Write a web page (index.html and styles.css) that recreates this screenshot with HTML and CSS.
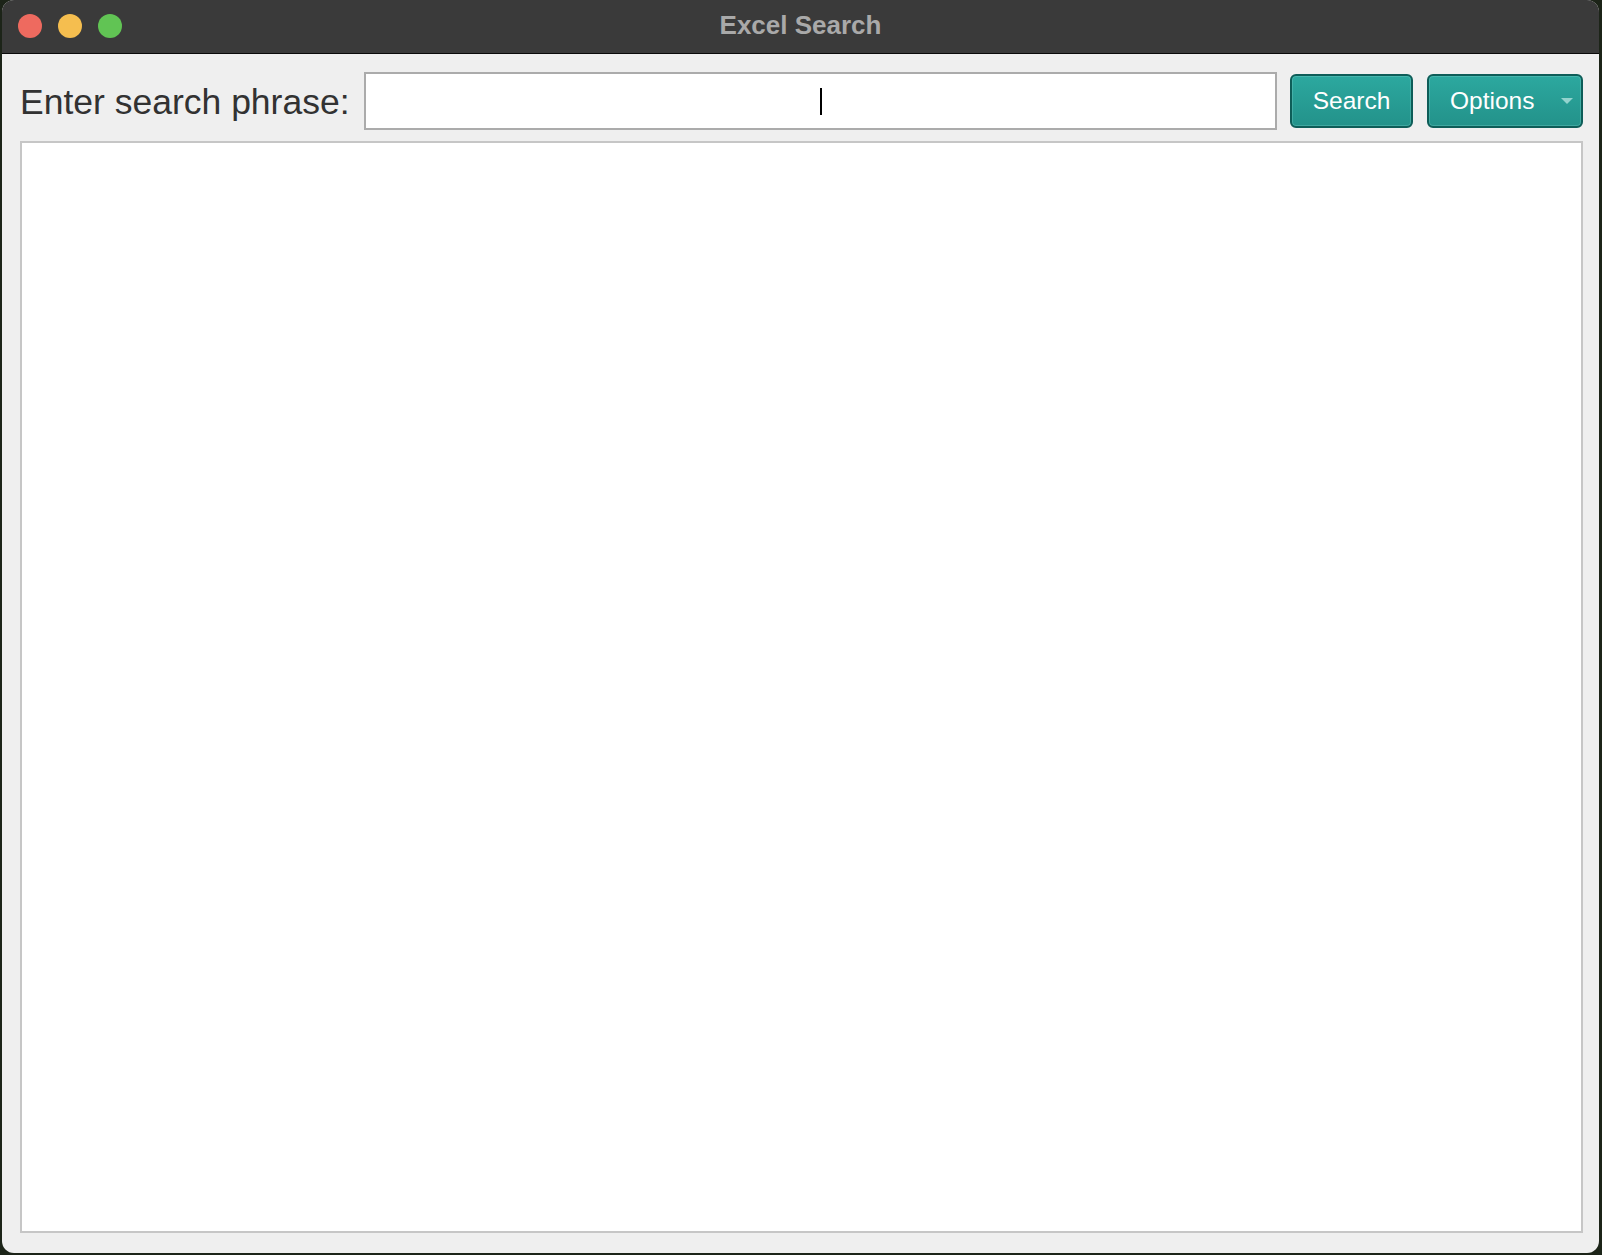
FILE: index.html
```html
<!DOCTYPE html>
<html>
<head>
<meta charset="utf-8">
<title>Excel Search</title>
<link rel="stylesheet" href="styles.css">
</head>
<body>
<div class="window">
  <div class="titlebar">
    <div class="lights">
      <span class="light red"></span>
      <span class="light yellow"></span>
      <span class="light green"></span>
    </div>
    <div class="title">Excel Search</div>
    <div></div>
  </div>
  <div class="content">
    <div class="row">
      <label class="label">Enter search phrase:</label>
      <div class="input"><span class="caret"></span></div>
      <button class="btn search">Search</button>
      <button class="btn options">Options<span class="arrow"></span></button>
    </div>
    <div class="results"></div>
  </div>
</div>
</body>
</html>
```
FILE: styles.css
```css
html, body {
  margin: 0;
  padding: 0;
}
body {
  width: 1602px;
  height: 1255px;
  overflow: hidden;
  background: #1c2418;
  font-family: "Liberation Sans", Arial, sans-serif;
}
.window {
  margin-left: 2px;
  width: 1597px;
  height: 1253px;
  border-radius: 12px;
  overflow: hidden;
  background: #efefef;
  display: flex;
  flex-direction: column;
  box-sizing: border-box;
}
.titlebar {
  height: 54px;
  box-sizing: border-box;
  background: #3a3a3a;
  border-bottom: 1px solid #0a0a0a;
  display: grid;
  grid-template-columns: 1fr auto 1fr;
  align-items: center;
  flex: none;
}
.lights {
  display: flex;
  gap: 16px;
  padding-left: 16px;
  margin-top: -1px;
}
.light {
  width: 24px;
  height: 24px;
  border-radius: 50%;
  display: block;
}
.red { background: #ee6a5f; }
.yellow { background: #f5be4f; }
.green { background: #61c454; }
.title {
  font-size: 26px;
  font-weight: bold;
  color: #a9a9a9;
  margin-top: -3px;
}
.content {
  flex: 1;
  display: flex;
  flex-direction: column;
  gap: 11px;
  padding: 18px 16px 20px 18px;
  min-height: 0;
}
.row {
  display: flex;
  align-items: center;
  height: 58px;
  flex: none;
}
.label {
  font-size: 35.5px;
  color: #323232;
  margin-right: 14.5px;
  white-space: nowrap;
  margin-top: 2px;
}
.input {
  flex: 1;
  height: 58px;
  box-sizing: border-box;
  border: 2px solid #ababab;
  background: #fff;
  display: flex;
  align-items: center;
  justify-content: center;
}
.caret {
  display: block;
  width: 2px;
  height: 27px;
  background: #000;
  margin-left: 1px;
}
.btn {
  height: 54px;
  box-sizing: border-box;
  border: 2px solid #0e5d58;
  border-radius: 6px;
  background: linear-gradient(#2ca89f, #23928a);
  box-shadow: inset 0 0 0 1px rgba(120, 210, 200, 0.35);
  color: #fff;
  font-family: "Liberation Sans", Arial, sans-serif;
  font-size: 24.5px;
  padding: 0;
  margin: 0;
  flex: none;
  position: relative;
  margin-top: -1px;
}
.search {
  width: 123px;
  margin-left: 13px;
}
.options {
  width: 156px;
  margin-left: 14px;
  text-align: left;
  padding-left: 21px;
}
.arrow {
  position: absolute;
  right: 8px;
  top: 22px;
  width: 0;
  height: 0;
  border-left: 6px solid transparent;
  border-right: 6px solid transparent;
  border-top: 6px solid #93d3ce;
}
.results {
  flex: 1;
  background: #fff;
  border: 2px solid #c6c6c6;
  box-sizing: border-box;
}
```
